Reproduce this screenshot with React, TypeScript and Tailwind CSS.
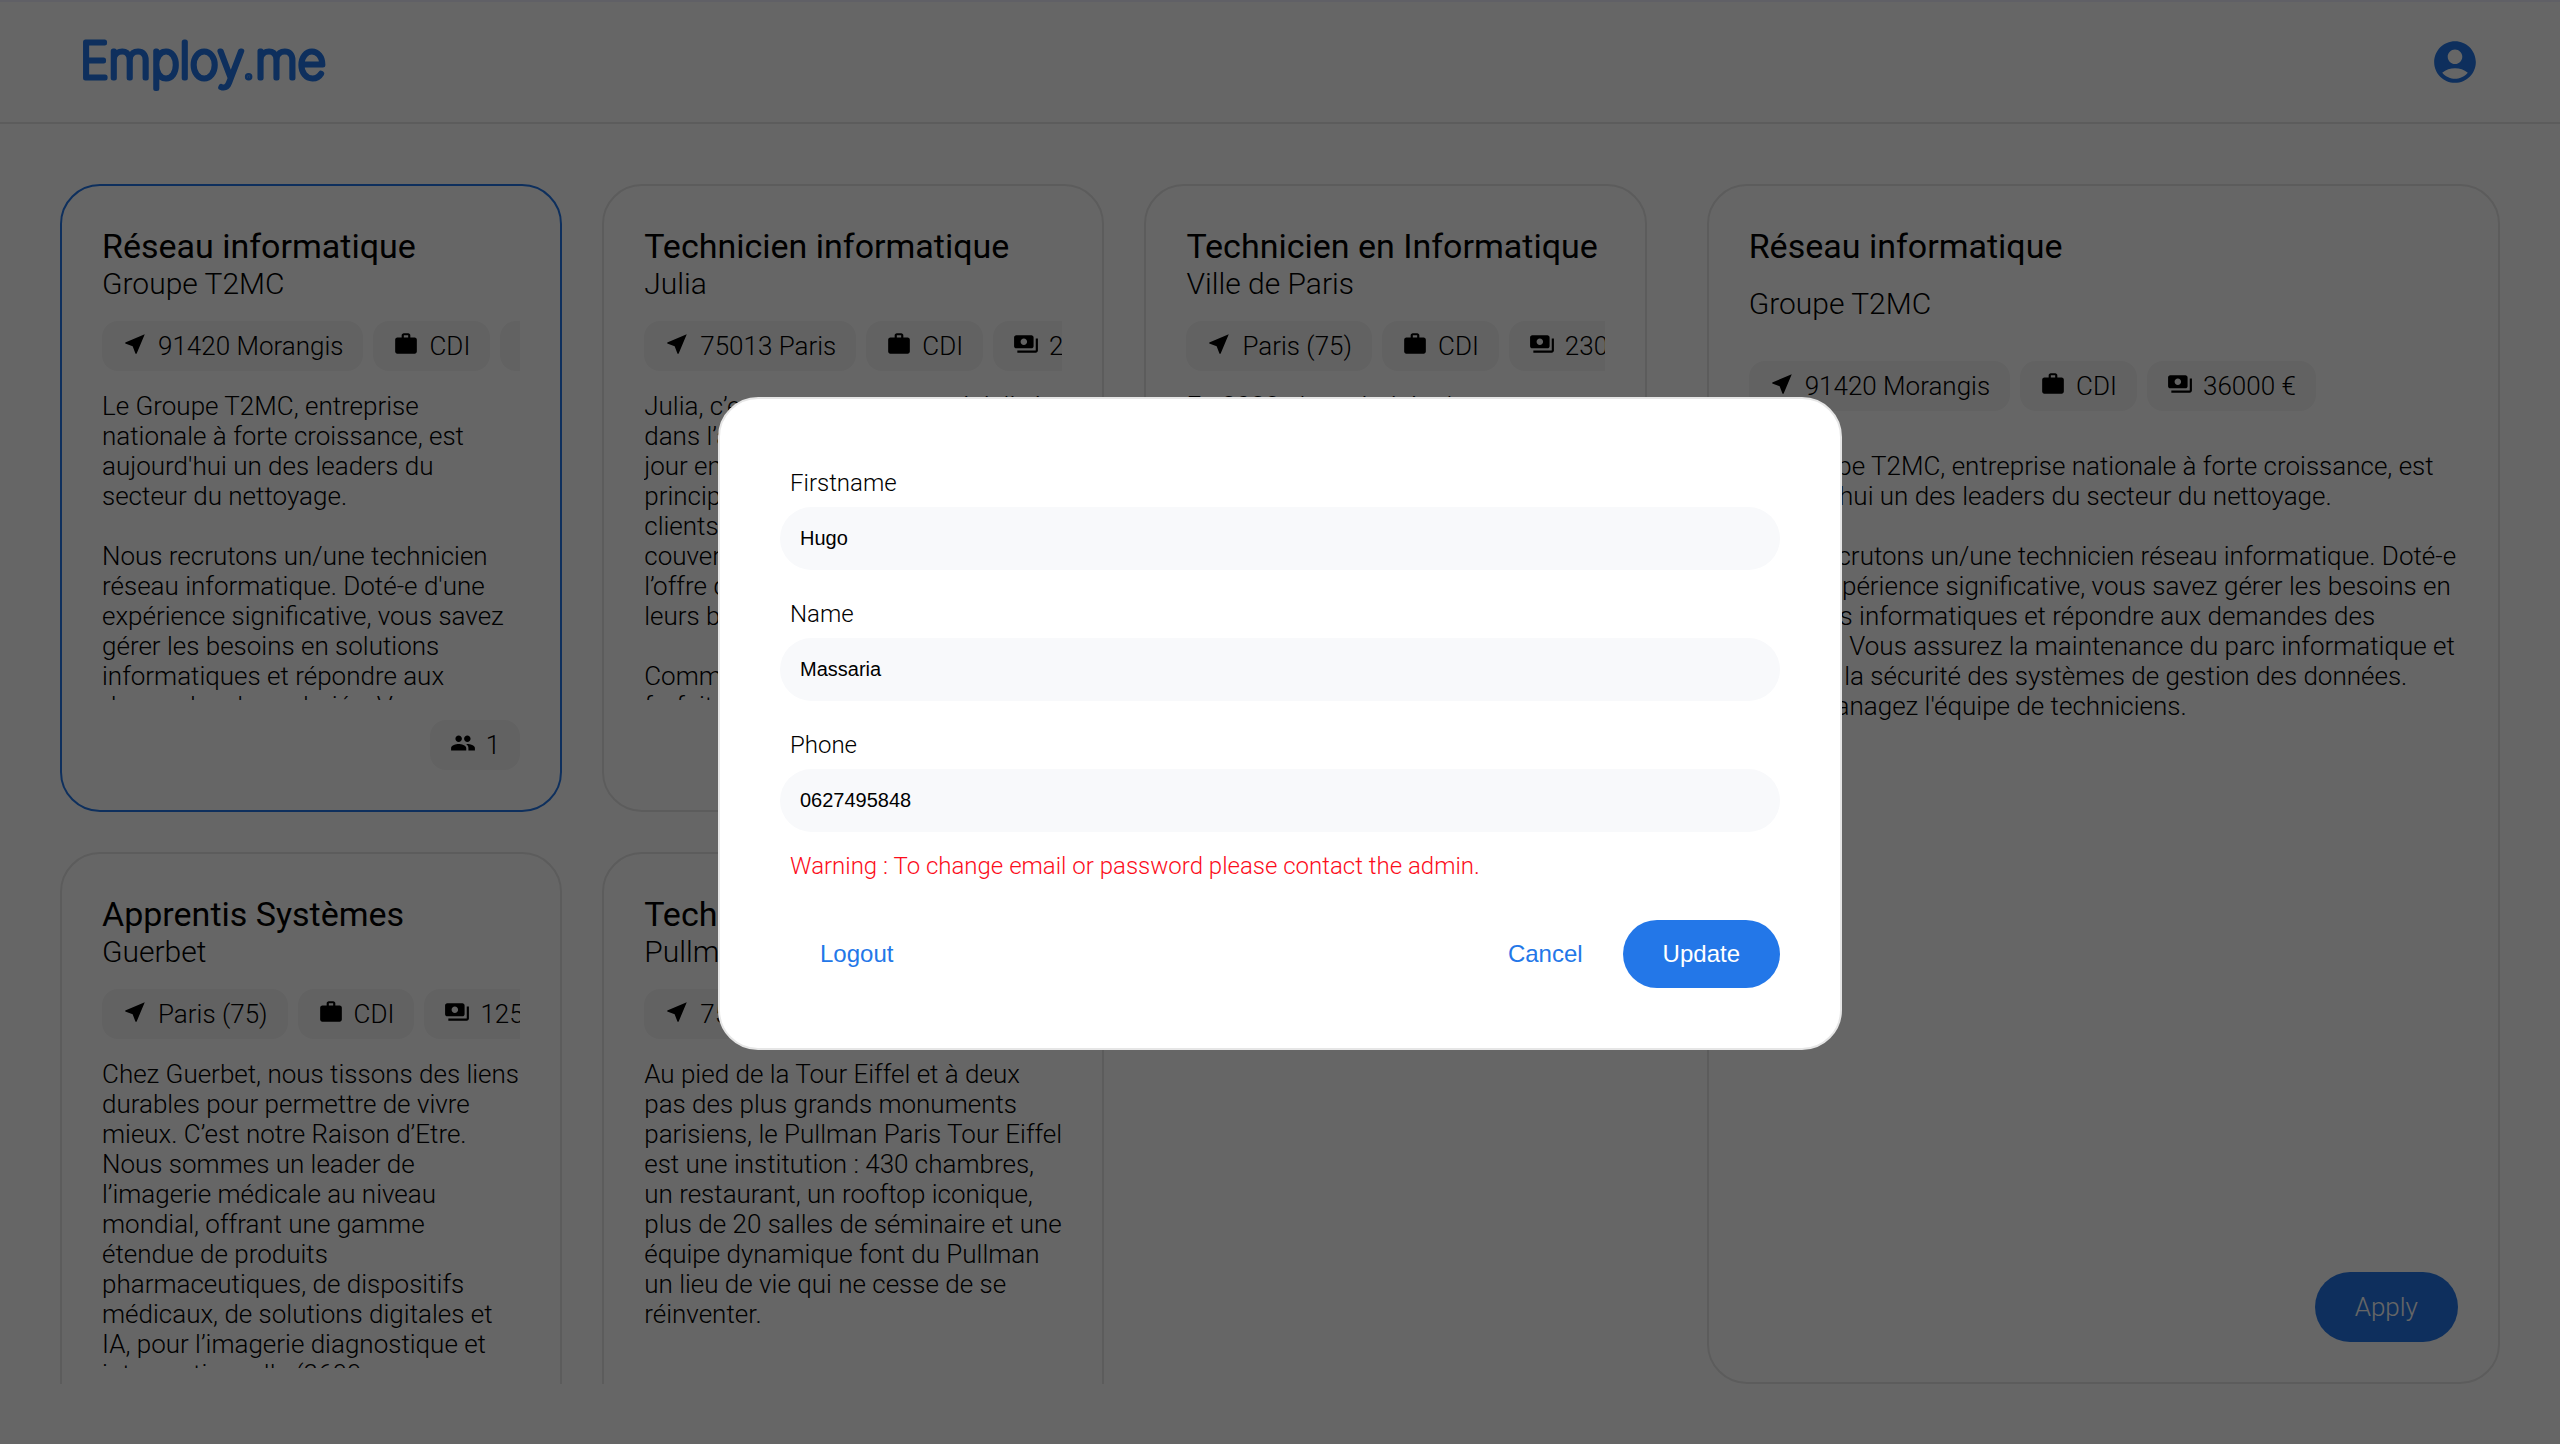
import { ReactNode } from "react";
import { MdAccountCircle, MdNearMe, MdPayments, MdPeople, MdWork } from "react-icons/md";

type Job = {
  title: string;
  company: string;
  place: string;
  contract: string;
  salary: string;
  text: string;
  applicants?: number;
};

const jobs: Job[] = [
  {
    title: "Réseau informatique",
    company: "Groupe T2MC",
    place: "91420 Morangis",
    contract: "CDI",
    salary: "36000 €",
    applicants: 1,
    text: "Le Groupe T2MC, entreprise nationale à forte croissance, est aujourd'hui un des leaders du secteur du nettoyage.\n\nNous recrutons un/une technicien réseau informatique. Doté-e d'une expérience significative, vous savez gérer les besoins en solutions informatiques et répondre aux demandes des salariés. Vous assurez la maintenance du parc informatique et assurez la sécurité des systèmes de gestion des données. Vous managez l'équipe de techniciens.",
  },
  {
    title: "Technicien informatique",
    company: "Julia",
    place: "75013 Paris",
    contract: "CDI",
    salary: "28000 €",
    text: "Julia, c’est une personne spécialisée\ndans l’accompagnement au\njour en jour des entreprises\nprincipalement pour des\nclients parisiens. Elle propose\ncouverture complète avec\nl’offre dédiée à chacun de\nleurs besoins.\n\nComment ? Avec un\nforfait informatique adapté.",
  },
  {
    title: "Technicien en Informatique",
    company: "Ville de Paris",
    place: "Paris (75)",
    contract: "CDI",
    salary: "23000 €",
    text: "En 2023, des priorités de nos usages à destination des Parisiens.",
  },
  {
    title: "Apprentis Systèmes",
    company: "Guerbet",
    place: "Paris (75)",
    contract: "CDI",
    salary: "12500 €",
    text: "Chez Guerbet, nous tissons des liens durables pour permettre de vivre mieux. C’est notre Raison d’Etre. Nous sommes un leader de l’imagerie médicale au niveau mondial, offrant une gamme étendue de produits pharmaceutiques, de dispositifs médicaux, de solutions digitales et IA, pour l’imagerie diagnostique et interventionnelle (2600 collaborateurs).",
  },
  {
    title: "Technicien support",
    company: "Pullman Paris",
    place: "75015 Paris",
    contract: "CDI",
    salary: "26000 €",
    text: "Au pied de la Tour Eiffel et à deux pas des plus grands monuments parisiens, le Pullman Paris Tour Eiffel est une institution : 430 chambres, un restaurant, un rooftop iconique, plus de 20 salles de séminaire et une équipe dynamique font du Pullman un lieu de vie qui ne cesse de se réinventer.",
  },
];

function Tag({ icon, children }: { icon: ReactNode; children: ReactNode }) {
  return (
    <span className="flex shrink-0 items-start gap-2.5 rounded-2xl bg-[#f5f5f5] px-5 py-2.5 text-[26px] leading-[30px] whitespace-nowrap">
      {icon}
      {children}
    </span>
  );
}

function Tags({ job }: { job: Job }) {
  return (
    <div className="flex shrink-0 gap-2.5 overflow-hidden">
      <Tag icon={<MdNearMe size={26} />}>{job.place}</Tag>
      <Tag icon={<MdWork size={26} />}>{job.contract}</Tag>
      <Tag icon={<MdPayments size={26} />}>{job.salary}</Tag>
    </div>
  );
}

function JobCard({ job, selected }: { job: Job; selected: boolean }) {
  return (
    <article
      className={
        selected
          ? "flex min-w-0 flex-col gap-5 rounded-[40px] border-2 border-[#2377e8] p-10"
          : "flex min-w-0 flex-col gap-5 rounded-[40px] border-2 border-[#e6e6e6] p-10"
      }
    >
      <div>
        <h2 className="text-[34px] leading-10 font-normal">{job.title}</h2>
        <p className="text-[30px] leading-[35px]">{job.company}</p>
      </div>
      <Tags job={job} />
      <p className="min-h-0 flex-1 overflow-hidden text-[26px] leading-[30px] whitespace-pre-line">{job.text}</p>
      <div className="flex h-[50px] shrink-0 justify-end">
        {job.applicants !== undefined && <Tag icon={<MdPeople size={26} />}>{job.applicants}</Tag>}
      </div>
    </article>
  );
}

function JobDetail({ job }: { job: Job }) {
  return (
    <section className="flex min-w-0 flex-col gap-10 rounded-[40px] border-2 border-[#e6e6e6] p-10">
      <div className="flex flex-col gap-5">
        <h2 className="text-[34px] leading-10 font-normal">{job.title}</h2>
        <p className="text-[30px] leading-[35px]">{job.company}</p>
      </div>
      <Tags job={job} />
      <p className="min-h-0 flex-1 overflow-hidden text-[26px] leading-[30px] whitespace-pre-line">{job.text}</p>
      <button
        type="button"
        className="self-end rounded-full bg-[#2377e8] px-10 py-5 text-[26px] leading-[30px] text-white"
      >
        Apply
      </button>
    </section>
  );
}

function Field({ id, label, value, type }: { id: string; label: string; value: string; type: string }) {
  return (
    <div className="flex flex-col gap-2.5 pt-2.5">
      <label htmlFor={id} className="px-2.5 text-[24px] leading-7">
        {label}
      </label>
      <input
        id={id}
        type={type}
        defaultValue={value}
        className="w-full rounded-full bg-[#f8f9fb] px-5 py-5 font-['Liberation_Sans',sans-serif] text-[20px] leading-[23px] font-normal outline-none"
      />
    </div>
  );
}

function ProfileDialog() {
  return (
    <div className="fixed inset-0 flex items-center justify-center bg-black/60 pt-0.5">
      <form
        role="dialog"
        aria-label="Profile"
        className="flex w-[1124px] max-w-full flex-col gap-5 rounded-[40px] border-2 border-[#e6e6e6] bg-white p-[60px]"
      >
        <Field id="firstname" label="Firstname" value="Hugo" type="text" />
        <Field id="name" label="Name" value="Massaria" type="text" />
        <Field id="phone" label="Phone" value="0627495848" type="tel" />
        <p className="px-2.5 text-[24px] leading-7 text-[#fc0d1b]">
          Warning : To change email or password please contact the admin.
        </p>
        <div className="flex pt-5 font-['Liberation_Sans',sans-serif] text-[24px] leading-7 font-normal">
          <button type="button" className="mr-auto px-10 py-5 text-[#2377e8]">
            Logout
          </button>
          <button type="button" className="px-10 py-5 text-[#2377e8]">
            Cancel
          </button>
          <button type="submit" className="rounded-full bg-[#2377e8] px-10 py-5 text-white">
            Update
          </button>
        </div>
      </form>
    </div>
  );
}

export default function App() {
  return (
    <div className="flex h-screen flex-col bg-white font-[Roboto,sans-serif] font-light text-black">
      <header className="flex h-[124px] shrink-0 items-center justify-between border-y-2 border-t-[#f0f0ff] border-b-[#e6e6e6] px-20">
        <a href="#" aria-label="Employ.me">
          <svg width="260" height="80" viewBox="0 0 260 80">
            <text
              x="0"
              y="56"
              fontSize="49"
              fill="#2377e8"
              stroke="#2377e8"
              strokeWidth="5"
              strokeLinejoin="round"
              className="font-[Inter,sans-serif] font-thin"
            >
              Employ.me
            </text>
          </svg>
        </a>
        <button type="button" aria-label="Account" className="text-[#2377e8]">
          <MdAccountCircle size={50} />
        </button>
      </header>
      <main className="grid min-h-0 flex-1 grid-cols-[2fr_1fr] gap-[60px] p-[60px]">
        <div className="grid min-h-0 auto-rows-[628px] grid-cols-3 gap-10 overflow-hidden">
          {jobs.map((job, i) => (
            <JobCard key={job.title} job={job} selected={i === 0} />
          ))}
        </div>
        <JobDetail job={jobs[0]} />
      </main>
      <ProfileDialog />
    </div>
  );
}
